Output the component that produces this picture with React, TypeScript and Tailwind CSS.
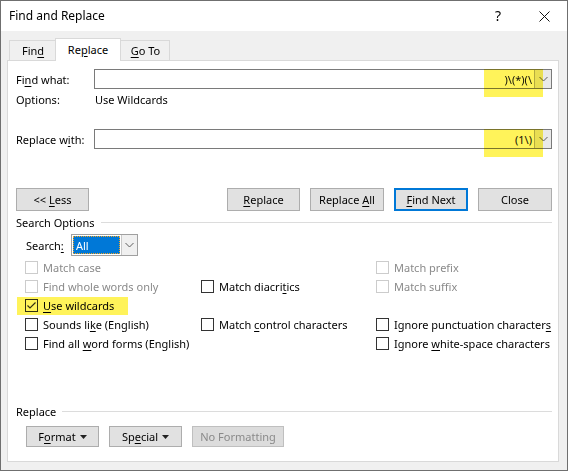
import React from "react";

// accelerator key: underline one letter of a label
const U: React.FC<{ children: React.ReactNode }> = ({ children }) => (
  <span className="underline underline-offset-[2px] decoration-[1px]">{children}</span>
);

const Chevron = () => (
  <svg width="9" height="6" viewBox="0 0 9 6" className="block">
    <polyline points="0.5,1 4.5,5 8.5,1" fill="none" stroke="#5f5f5f" strokeWidth="1" />
  </svg>
);

const Caret = () => (
  <svg width="7" height="4" viewBox="0 0 7 4" className="ml-[4px] inline-block">
    <polygon points="0,0 7,0 3.5,4" fill="#222" />
  </svg>
);

type FieldProps = { label: React.ReactNode; value: string };

const ComboField: React.FC<FieldProps> = ({ label, value }) => (
  <div className="flex h-[20px] items-center">
    <div className="w-[78px] shrink-0">{label}</div>
    <div className="relative flex h-[20px] flex-1 border border-[#7a7a7a] bg-white">
      <div className="flex flex-1 items-center justify-end pr-[2px] text-[#111]">{value}</div>
      <div className="flex w-[17px] items-center justify-center border-l border-[#b4b4b4] bg-[#e9e9e9]">
        <Chevron />
      </div>
      {/* marker annotation over the field */}
      <div className="pointer-events-none absolute -top-[1px] right-[8px] h-[28px] w-[59px] bg-[#fff35a] mix-blend-multiply" />
    </div>
  </div>
);

const Btn: React.FC<{ children: React.ReactNode; w?: string; primary?: boolean; disabled?: boolean; h?: string }> = ({
  children,
  w = "w-[74px]",
  primary,
  disabled,
  h = "h-[23px]",
}) => (
  <button
    className={
      primary
        ? `${w} ${h} border-2 border-[#0078d7] bg-[#e1e1e1] text-black flex items-center justify-center`
        : disabled
        ? `${w} ${h} border border-[#bfbfbf] bg-[#dcdcdc] text-[#8a8a8a] flex items-center justify-center`
        : `${w} ${h} border border-[#adadad] bg-[#e1e1e1] text-black flex items-center justify-center`
    }
  >
    {children}
  </button>
);

const Check: React.FC<{ label: React.ReactNode; disabled?: boolean; checked?: boolean }> = ({
  label,
  disabled,
  checked,
}) => (
  <div className={disabled ? "flex items-center gap-[5px] text-[#8a8a8a]" : "flex items-center gap-[5px] text-black"}>
    <div
      className={
        disabled
          ? "h-[13px] w-[13px] shrink-0 border border-[#cccccc] bg-white"
          : "flex h-[13px] w-[13px] shrink-0 items-center justify-center border border-[#333] bg-white"
      }
    >
      {checked && (
        <svg width="11" height="11" viewBox="0 0 11 11">
          <polyline points="1.5,5.5 4,8 9.5,2.5" fill="none" stroke="#333" strokeWidth="1.2" />
        </svg>
      )}
    </div>
    <span className="whitespace-nowrap">{label}</span>
  </div>
);

const SectionHead: React.FC<{ title: string }> = ({ title }) => (
  <div className="flex h-[16px] items-center gap-[6px]">
    <span className="whitespace-nowrap">{title}</span>
    <div className="h-px flex-1 bg-[#dcdcdc]" />
  </div>
);

export default function App() {
  return (
    <div className="flex h-[471px] w-[568px] flex-col border border-[#6f6f6f] bg-[#f0f0f0] font-['Noto_Sans',sans-serif] text-[11px] leading-none text-black">
      {/* Title bar */}
      <div className="flex h-[30px] shrink-0 items-center bg-white">
        <div className="flex-1 pl-[8px] text-[12px]">Find and Replace</div>
        <div className="flex h-full w-[46px] items-center justify-center text-[14px]">?</div>
        <div className="flex h-full w-[46px] items-center justify-center">
          <svg width="11" height="11" viewBox="0 0 11 11">
            <path d="M0.5 0.5 L10.5 10.5 M10.5 0.5 L0.5 10.5" stroke="#111" strokeWidth="1" />
          </svg>
        </div>
      </div>

      {/* Tabs */}
      <div className="mt-[7px] flex h-[22px] shrink-0 items-end pl-[8px]">
        <div className="flex h-[20px] w-[48px] items-center justify-center border border-b-0 border-[#d9d9d9] bg-[#f0f0f0]">
          Fin<U>d</U>
        </div>
        <div className="relative z-10 -mb-[1px] -ml-[2px] flex h-[23px] w-[66px] items-center justify-center border border-b-0 border-[#d9d9d9] bg-white pb-[1px]">
          Re<U>p</U>lace
        </div>
        <div className="-ml-[2px] flex h-[20px] w-[51px] items-center justify-center border border-b-0 border-[#d9d9d9] bg-[#f0f0f0] pl-[2px]">
          <U>G</U>o To
        </div>
      </div>

      {/* Panel */}
      <div className="mb-[8px] ml-[6px] mr-[8px] flex flex-1 flex-col border border-[#d9d9d9] bg-white pl-[8px] pr-[6px]">
        <div className="mt-[8px]">
          <ComboField
            label={
              <>
                Fi<U>n</U>d what:
              </>
            }
            value=")\(*)(\"
          />
        </div>
        <div className="flex h-[20px] items-center">
          <div className="w-[79px] shrink-0">Options:</div>
          <div>Use Wildcards</div>
        </div>
        <div className="mt-[20px]">
          <ComboField
            label={
              <>
                Replace w<U>i</U>th:
              </>
            }
            value="(1\)"
          />
        </div>

        {/* Action buttons */}
        <div className="mt-[39px] flex items-center">
          <Btn w="w-[73px]">
            &lt;&lt;&nbsp;<U>L</U>ess
          </Btn>
          <div className="ml-auto flex gap-[10px]">
            <Btn w="w-[73px]">
              <U>R</U>eplace
            </Btn>
            <Btn>
              Replace&nbsp;<U>A</U>ll
            </Btn>
            <Btn primary>
              <U>F</U>ind Next
            </Btn>
            <Btn>Close</Btn>
          </div>
        </div>

        <div className="mt-[3px]">
          <SectionHead title="Search Options" />
        </div>

        <div className="mt-[4px] flex h-[22px] items-center pl-[10px]">
          <div className="w-[45px]">
            Search<U>:</U>
          </div>
          <div className="flex h-[22px] w-[67px] border border-[#a0a0a0] bg-white">
            <div className="m-[1px] flex w-[47px] items-center border border-dotted border-[#f5a623] bg-[#0078d7] pl-[2px] text-white">
              All
            </div>
            <div className="flex flex-1 items-center justify-center border-l border-[#c8c8c8] bg-[#f0f0f0]">
              <Chevron />
            </div>
          </div>
        </div>

        {/* Options grid */}
        <div className="relative mt-[2px] grid grid-cols-[176px_175px_1fr] grid-rows-[repeat(5,19px)] items-center pl-[9px]">
          <Check label="Match case" disabled />
          <div />
          <Check label="Match prefix" disabled />

          <Check label="Find whole words only" disabled />
          <Check
            label={
              <>
                Match diacri<U>t</U>ics
              </>
            }
          />
          <Check label="Match suffix" disabled />

          <Check
            checked
            label={
              <>
                <U>U</U>se wildcards
              </>
            }
          />
          <div />
          <div />

          <Check
            label={
              <>
                Sounds li<U>k</U>e (English)
              </>
            }
          />
          <Check
            label={
              <>
                Match <U>c</U>ontrol characters
              </>
            }
          />
          <Check
            label={
              <>
                Ignore punctuation character<U>s</U>
              </>
            }
          />

          <Check
            label={
              <>
                Find all <U>w</U>ord forms (English)
              </>
            }
          />
          <div />
          <Check
            label={
              <>
                Ignore <U>w</U>hite-space characters
              </>
            }
          />

          {/* marker annotation over "Use wildcards" */}
          <div className="pointer-events-none absolute left-[1px] top-[39px] h-[18px] w-[111px] bg-[#fff35a] mix-blend-multiply" />
        </div>

        <div className="mt-[50px]">
          <SectionHead title="Replace" />
        </div>

        <div className="mt-[7px] flex gap-[10px] pl-[10px]">
          <Btn w="w-[73px]" h="h-[21px]">
            F<U>o</U>rmat
            <Caret />
          </Btn>
          <Btn w="w-[73px]" h="h-[21px]">
            Sp<U>e</U>cial
            <Caret />
          </Btn>
          <Btn w="w-[92px]" h="h-[21px]" disabled>
            No Formatting
          </Btn>
        </div>
      </div>
    </div>
  );
}
